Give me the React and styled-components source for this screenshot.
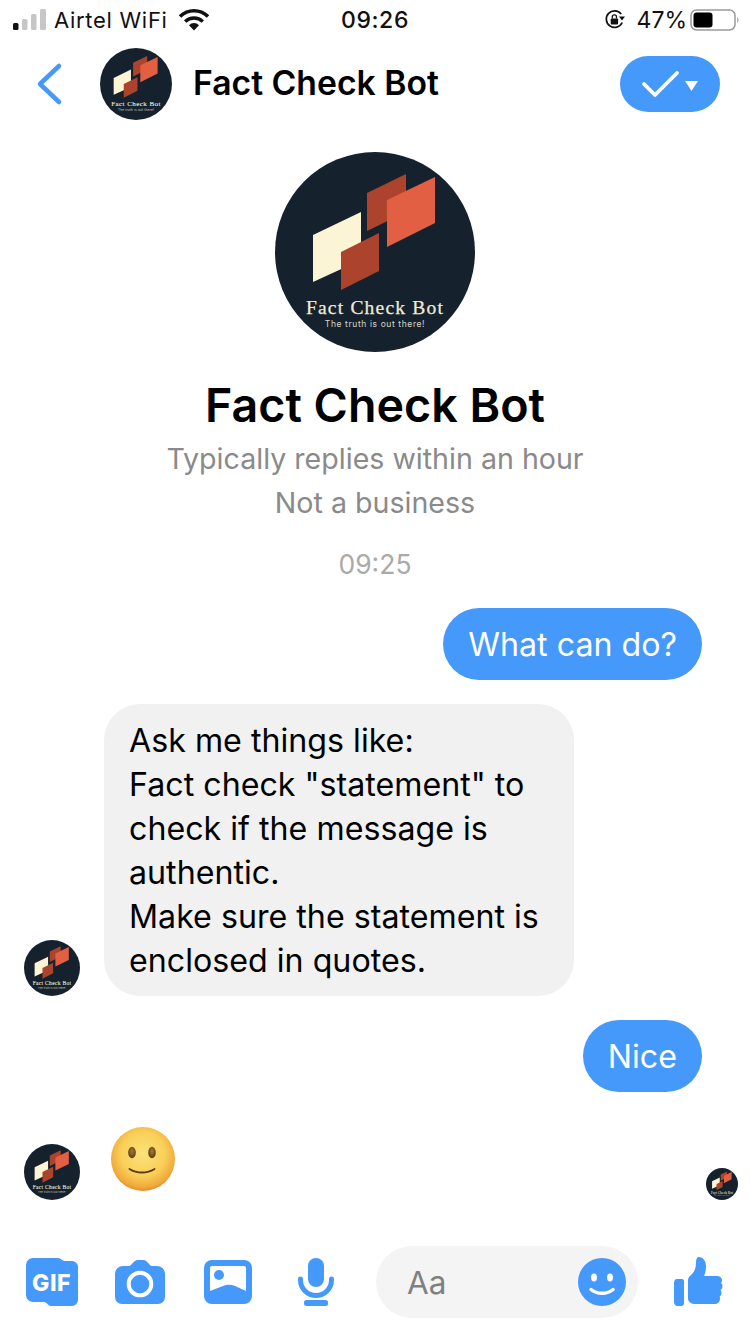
import React from "react";
import styled, { createGlobalStyle } from "styled-components";

const BLUE = "#4599fa";

const Global = createGlobalStyle`
  html, body { margin: 0; padding: 0; background: #fff; }
  body { font-family: Inter, "Liberation Sans", sans-serif; color: #000; }
  * { box-sizing: border-box; }
`;

const Screen = styled.div`
  width: 750px;
  height: 1334px;
  overflow: hidden;
  display: flex;
  flex-direction: column;
  background: #fff;
`;

const StatusBar = styled.div`
  height: 40px;
  display: grid;
  grid-template-columns: 1fr auto 1fr;
  align-items: center;
  padding: 0 10px 0 13px;
  font-size: 22px;
  line-height: 40px;
  color: #111;
`;
const StatusLeft = styled.div`
  display: flex;
  align-items: center;
`;
const StatusRight = styled.div`
  display: flex;
  align-items: center;
  justify-content: flex-end;
`;
const Carrier = styled.span`
  margin: 0 11px 0 8px;
  letter-spacing: 0.7px;
`;
const Clock = styled.span`
  font-size: 23px;
  font-weight: 500;
  letter-spacing: 0.6px;
  margin-right: 3px;
`;
const Percent = styled.span`
  font-size: 23px;
  margin: 0 3px 0 11px;
`;

const Header = styled.div`
  height: 88px;
  display: flex;
  align-items: center;
  padding-left: 35px;
`;
const BackIcon = styled.svg`
  width: 28px;
  height: 44px;
  margin-right: 37px;
`;
const HeaderTitle = styled.div`
  margin-left: 21px;
  font-size: 33.7px;
  font-weight: 600;
  line-height: 40px;
  margin-top: -2px;
  flex: 1;
`;
const CheckButton = styled.div`
  width: 100px;
  height: 56px;
  margin: 0 30px 0 0;
  border-radius: 28px;
  background: ${BLUE};
  display: flex;
  align-items: center;
  justify-content: center;
`;

const Intro = styled.div`
  margin-top: 24px;
  display: flex;
  flex-direction: column;
  align-items: center;
`;
const IntroTitle = styled.div`
  margin: 23px 0 2px;
  font-size: 46.6px;
  line-height: 60px;
  font-weight: 600;
`;
const IntroLine = styled.div`
  font-size: 28.6px;
  line-height: 44px;
  color: #8a8a8a;
`;
const TimeStamp = styled.div`
  margin-top: 17px;
  font-size: 26.5px;
  line-height: 44px;
  color: #aaaaaa;
`;

const Thread = styled.div`
  margin-top: 22px;
  display: flex;
  flex-direction: column;
  gap: 24px;
  flex: 1;
`;
const OutRow = styled.div`
  display: flex;
  justify-content: flex-end;
  padding-right: 48px;
`;
const InRow = styled.div`
  display: flex;
  align-items: flex-end;
  padding-left: 24px;
  gap: 24px;
`;
const Bubble = styled.div`
  padding: 15px 25px 13px;
  border-radius: 36px;
  font-size: 32.2px;
  line-height: 44px;
  background: ${(p) => (p.$out ? BLUE : "#f1f1f1")};
  color: ${(p) => (p.$out ? "#fff" : "#000")};
  width: ${(p) => p.$width || "auto"};
`;
const EmojiRow = styled.div`
  display: flex;
  align-items: flex-end;
  margin-top: 10px;
  padding: 0 12px 0 24px;
`;
const EmojiIcon = styled.svg`
  width: 66px;
  height: 66px;
  margin: 0 0 8px 30px;
`;
const Receipt = styled.div`
  margin-left: auto;
  display: flex;
`;

const Composer = styled.div`
  height: 72px;
  margin-bottom: 16px;
  padding-left: 8px;
  display: flex;
  align-items: center;
`;
const ToolSlot = styled.div`
  width: 88px;
  display: flex;
  justify-content: center;
`;
const InputPill = styled.div`
  width: 262px;
  height: 72px;
  margin-left: 16px;
  border-radius: 36px;
  background: #f4f4f4;
  display: flex;
  align-items: center;
  justify-content: space-between;
  padding: 0 12px 0 31px;
  font-size: 31.5px;
  color: #808080;
`;
const LikeSlot = styled.div`
  margin-left: 36px;
  display: flex;
`;

function Logo({ size }) {
  return (
    <svg width={size} height={size} viewBox="0 0 200 200" style={{ display: "block", flex: "none" }}>
      <circle cx="100" cy="100" r="100" fill="#15222e" />
      <polygon points="38,83 86,60 86,108 38,130" fill="#fbf5d6" />
      <polygon points="92,41 131,22 131,60 92,79" fill="#ac432c" />
      <polygon points="112,48 160,25 160,71 112,95" fill="#e35f44" />
      <polygon points="66,100 104,81 104,119 66,138" fill="#ac432c" />
      <text x="100" y="162" textAnchor="middle" fontFamily="'Liberation Serif', serif" fontSize="19.5" letterSpacing="1.2" fill="#efebd8" stroke="#efebd8" strokeWidth="0.25">
        Fact Check Bot
      </text>
      <text x="100" y="175" textAnchor="middle" fontFamily="Inter, sans-serif" fontSize="8.5" letterSpacing="0.6" fill="#d8d6c8">
        The truth is out there!
      </text>
    </svg>
  );
}

const Signal = () => (
  <svg width="33" height="22" viewBox="0 0 33 22">
    <rect x="0" y="14" width="5.5" height="7" rx="1.5" fill="#111" />
    <rect x="9" y="10" width="5.5" height="11" rx="1.5" fill="#c6c6c6" />
    <rect x="18" y="5" width="5.5" height="16" rx="1.5" fill="#c6c6c6" />
    <rect x="27" y="0" width="6" height="21" rx="1.5" fill="#c6c6c6" />
  </svg>
);

const Wifi = () => (
  <svg width="30" height="22" viewBox="0 0 30 22">
    <path d="M1 7.5a20 20 0 0 1 28 0" fill="none" stroke="#111" strokeWidth="3.4" />
    <path d="M6.2 12.6a12.6 12.6 0 0 1 17.6 0" fill="none" stroke="#111" strokeWidth="3.4" />
    <path d="M10 16.3a6.8 6.8 0 0 1 10 0L15 21.5z" fill="#111" />
  </svg>
);

const RotationLock = () => (
  <svg width="22" height="22" viewBox="0 0 22 22">
    <path d="M18.2 13.5A8.3 8.3 0 1 1 17.2 5" fill="none" stroke="#111" strokeWidth="1.7" />
    <path d="M15 7.5h6l-3 4z" fill="#111" />
    <rect x="6.7" y="9.5" width="7.4" height="6" rx="1" fill="#111" />
    <path d="M8.3 9.5V8a2.1 2.1 0 0 1 4.2 0v1.5" fill="none" stroke="#111" strokeWidth="1.3" />
  </svg>
);

const Battery = () => (
  <svg width="50" height="24" viewBox="0 0 50 24">
    <rect x="1" y="2" width="44" height="20" rx="5.5" fill="none" stroke="#9a9a9a" strokeWidth="1.5" />
    <rect x="3.5" y="4.5" width="19" height="15" rx="3" fill="#000" />
    <path d="M47 9a3.5 3.5 0 0 1 0 6z" fill="#b5b5b5" />
  </svg>
);

const Gif = () => (
  <svg width="52" height="48" viewBox="0 0 52 48">
    <path d="M7 0h25c3 0 4 3 7 3h7a6 6 0 0 1 6 6v33a6 6 0 0 1-6 6H25c-3 0-4-4-7-4H7a7 7 0 0 1-7-7V7a7 7 0 0 1 7-7z" fill={BLUE} />
    <text x="25.5" y="32.5" textAnchor="middle" fontFamily="Inter, sans-serif" fontWeight="800" fontSize="23" letterSpacing="0.5" fill="#fff">GIF</text>
  </svg>
);

const Camera = () => (
  <svg width="50" height="44" viewBox="0 0 50 44">
    <path d="M9 6h5c3 0 4-6 9-6h5c5 0 6 6 9 6h5a8 8 0 0 1 8 8v23a7 7 0 0 1-7 7H7a7 7 0 0 1-7-7V14a8 8 0 0 1 8-8z" fill={BLUE} />
    <circle cx="25" cy="24" r="11.3" fill="none" stroke="#fff" strokeWidth="4" />
  </svg>
);

const Photo = () => (
  <svg width="48" height="44" viewBox="0 0 48 44">
    <rect width="48" height="44" rx="8" fill={BLUE} />
    <path d="M8 6h32a2 2 0 0 1 2 2v23l-11-5c-4-1.800-8-1.800-12 0L6 31V8a2 2 0 0 1 2-2z" fill="#fff" />
    <circle cx="15" cy="15" r="5" fill={BLUE} />
  </svg>
);

const Mic = () => (
  <svg width="36" height="48" viewBox="0 0 36 48">
    <rect x="10" y="0" width="16" height="29" rx="8" fill={BLUE} />
    <path d="M2.500 21v1a15.500 15.500 0 0 0 31 0v-1" fill="none" stroke={BLUE} strokeWidth="5" strokeLinecap="round" />
    <rect x="6" y="42" width="24" height="6" rx="2.500" fill={BLUE} />
  </svg>
);

const Smile = () => (
  <svg width="48" height="48" viewBox="0 0 48 48">
    <circle cx="24" cy="24" r="24" fill={BLUE} />
    <ellipse cx="16" cy="19.500" rx="3" ry="4" fill="#fff" />
    <ellipse cx="32" cy="19.500" rx="3" ry="4" fill="#fff" />
    <path d="M13 31.500c6 5 16 5 22 0" fill="none" stroke="#fff" strokeWidth="3.500" strokeLinecap="round" />
  </svg>
);

const Thumb = () => (
  <svg width="49" height="50" viewBox="0 0 49 50">
    <path d="M3 22h5a2 2 0 0 1 2 2v22a3 3 0 0 1-3 3H3.500C1.500 49 0 47 0 45V26c0-2 1-4 3-4z" fill={BLUE} />
    <path d="M14 23c0-2 1-3 3-5 4-4 5-7 5-13 0-3 1-5 3-5 4 0 7 4 7 9 0 4-.8 8-2 10h13c3 0 5 2 5 4 0 1.500-.5 2.500-1 3 1.200 1 1.500 2 1.500 3.500S47.500 32 46.500 33c.7.800 1 1.800 1 3 0 1.500-.8 2.800-1.800 3.500.3.700.3 1.500.3 2 0 3-2 5.500-5 5.500H22c-5 0-8-2-8-6z" fill={BLUE} />
  </svg>
);

const Emoji = () => (
  <EmojiIcon viewBox="0 0 66 66">
    <defs>
      <radialGradient id="face" cx="50%" cy="42%" r="58%">
        <stop offset="0%" stopColor="#fce27a" />
        <stop offset="60%" stopColor="#f9cf58" />
        <stop offset="90%" stopColor="#f0a93a" />
        <stop offset="100%" stopColor="#e08f2c" />
      </radialGradient>
      <radialGradient id="eye" cx="50%" cy="40%" r="60%">
        <stop offset="0%" stopColor="#a57a35" />
        <stop offset="100%" stopColor="#5b3a14" />
      </radialGradient>
    </defs>
    <circle cx="33" cy="33" r="32" fill="url(#face)" />
    <ellipse cx="22" cy="26.500" rx="3.800" ry="5.800" fill="url(#eye)" />
    <ellipse cx="42" cy="26.500" rx="3.800" ry="5.800" fill="url(#eye)" />
    <path d="M19.500 43c7.500 4.800 17.500 4.800 25 0" fill="none" stroke="#5b3a14" strokeWidth="2" strokeLinecap="round" />
  </EmojiIcon>
);

export default function App() {
  return (
    <Screen>
      <Global />
      <StatusBar>
        <StatusLeft>
          <Signal />
          <Carrier>Airtel WiFi</Carrier>
          <Wifi />
        </StatusLeft>
        <Clock>09:26</Clock>
        <StatusRight>
          <RotationLock />
          <Percent>47%</Percent>
          <Battery />
        </StatusRight>
      </StatusBar>

      <Header>
        <BackIcon viewBox="0 0 28 44">
          <path d="M24 4 L5 22 L24 40" fill="none" stroke={BLUE} strokeWidth="4.500" strokeLinecap="round" strokeLinejoin="round" />
        </BackIcon>
        <Logo size={72} />
        <HeaderTitle>Fact Check Bot</HeaderTitle>
        <CheckButton>
          <svg width="58" height="30" viewBox="0 0 58 30">
            <path d="M3 15 L14 26 L36 4" fill="none" stroke="#fff" strokeWidth="3.800" strokeLinecap="round" strokeLinejoin="round" />
            <path d="M44 12h13l-6.500 10z" fill="#fff" />
          </svg>
        </CheckButton>
      </Header>

      <Intro>
        <Logo size={200} />
        <IntroTitle>Fact Check Bot</IntroTitle>
        <IntroLine>Typically replies within an hour</IntroLine>
        <IntroLine>Not a business</IntroLine>
        <TimeStamp>09:25</TimeStamp>
      </Intro>

      <Thread>
        <OutRow>
          <Bubble $out>What can do?</Bubble>
        </OutRow>
        <InRow>
          <Logo size={56} />
          <Bubble $width="470px">
            Ask me things like:
            <br />
            Fact check "statement" to check if the message is authentic.
            <br />
            Make sure the statement is enclosed in quotes.
          </Bubble>
        </InRow>
        <OutRow>
          <Bubble $out>Nice</Bubble>
        </OutRow>
        <EmojiRow>
          <Logo size={56} />
          <Emoji />
          <Receipt>
            <Logo size={32} />
          </Receipt>
        </EmojiRow>
      </Thread>

      <Composer>
        <ToolSlot><Gif /></ToolSlot>
        <ToolSlot><Camera /></ToolSlot>
        <ToolSlot><Photo /></ToolSlot>
        <ToolSlot><Mic /></ToolSlot>
        <InputPill>
          Aa
          <Smile />
        </InputPill>
        <LikeSlot><Thumb /></LikeSlot>
      </Composer>
    </Screen>
  );
}
